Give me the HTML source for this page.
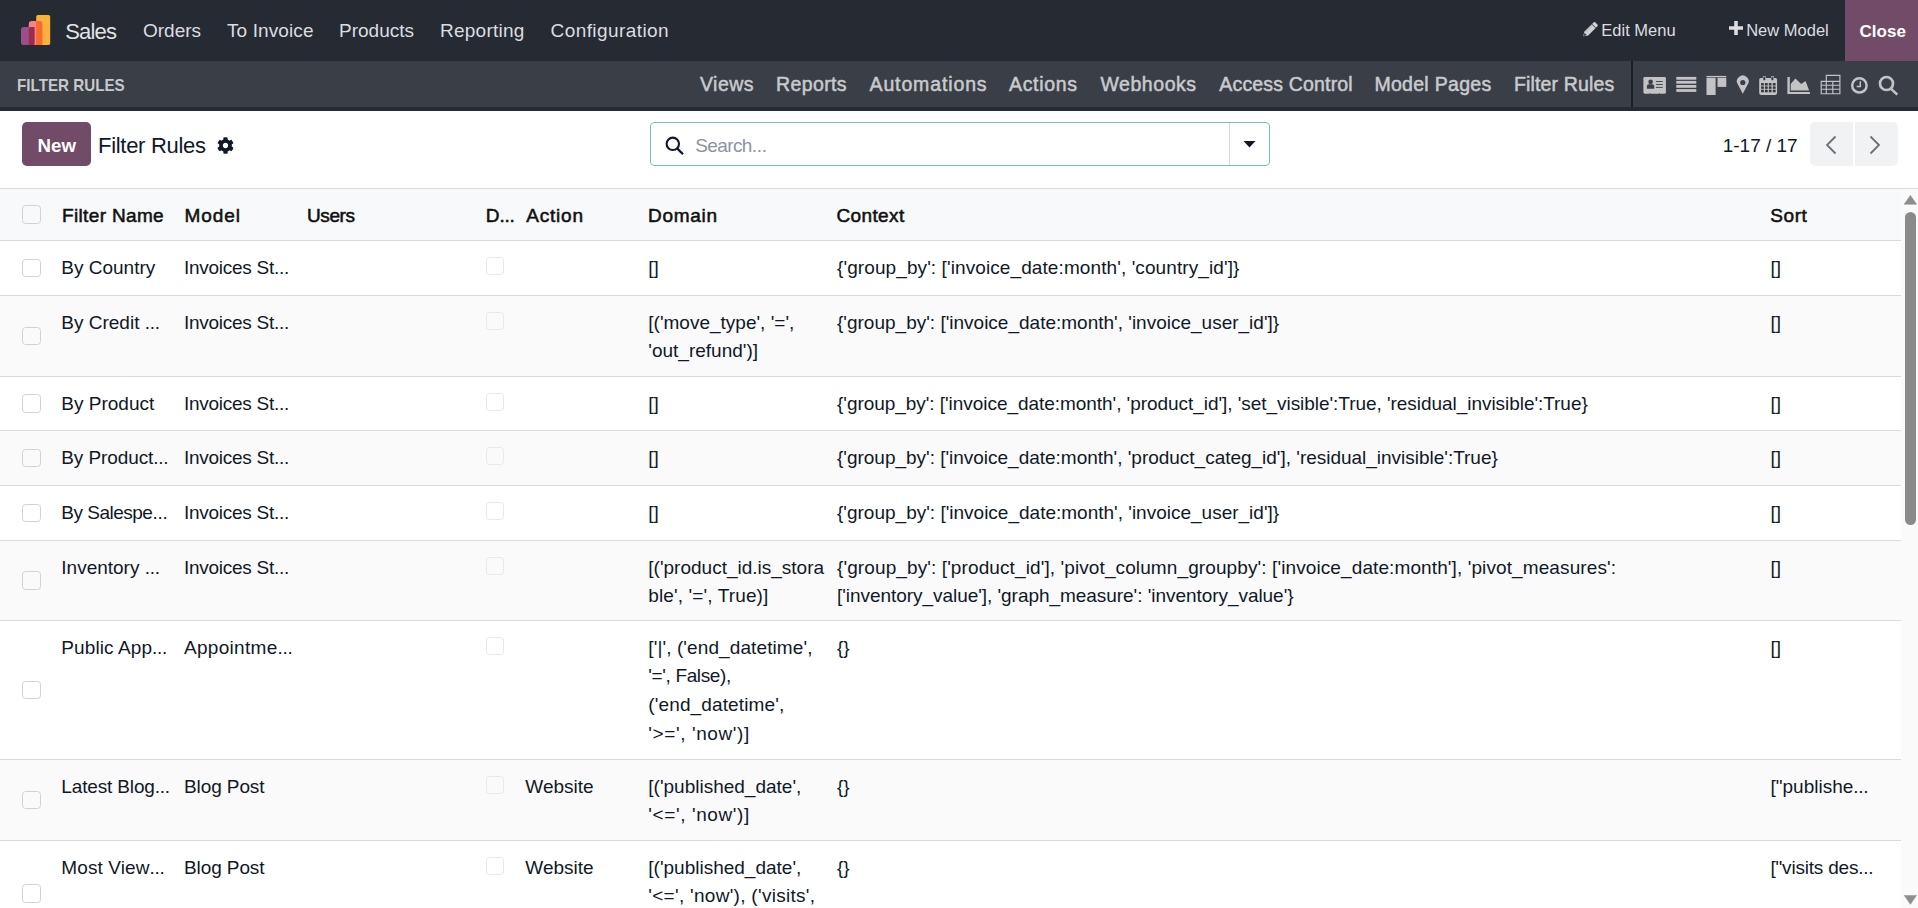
<!DOCTYPE html>
<html><head><meta charset="utf-8"><title>Filter Rules</title>
<style>
html,body{margin:0;padding:0;}
body{width:1918px;height:908px;overflow:hidden;position:relative;background:#fff;font-family:"Liberation Sans",sans-serif;}
.t{position:absolute;white-space:pre;line-height:1;}
#nav{position:absolute;left:0;top:0;width:1918px;height:60.5px;background:#262a33}
#sub{position:absolute;left:0;top:60.5px;width:1918px;height:46px;background:#3a3e47;border-bottom:4px solid #262a33}
.cb{position:absolute;width:16.5px;height:16.5px;border:1px solid #cfd2d7;border-radius:3.5px;background:transparent}
.cbd{border-color:#e6e8eb;width:16px;height:16px}
.el{letter-spacing:-0.3px}
</style></head><body>
<div id="nav"></div>
<svg id="logo" width="32" height="32" viewBox="0 0 32 32" style="position:absolute;left:20px;top:14px">
<rect x="16.2" y="0.9" width="14" height="30.1" rx="1.8" fill="#fbb13c"/>
<rect x="8.8" y="7.1" width="13.5" height="23.9" rx="2.8" fill="#f7828a"/>
<rect x="1" y="12.9" width="13.5" height="18.1" rx="2.8" fill="#9a4f8c"/>
<path d="M8.8 15.7 a2.8 2.8 0 0 1 2.8 -2.8 h2.9 v18.1 h-5.7z" fill="#9a2c4c"/>
<path d="M16.2 7.1 h3.3 a2.8 2.8 0 0 1 2.8 2.8 v21.1 h-6.1z" fill="#f86a28"/>
</svg>
<div class="t" style="left:65.3px;top:21.00px;font-size:22px;color:#e2e3e5;font-weight:400;letter-spacing:-0.85px">Sales</div>
<div class="t" style="left:143px;top:21.00px;font-size:19px;color:#dcdde0;font-weight:400;letter-spacing:0px">Orders</div>
<div class="t" style="left:227px;top:21.00px;font-size:19px;color:#dcdde0;font-weight:400;letter-spacing:0.1px">To Invoice</div>
<div class="t" style="left:339px;top:21.00px;font-size:19px;color:#dcdde0;font-weight:400;letter-spacing:0px">Products</div>
<div class="t" style="left:440px;top:21.00px;font-size:19px;color:#dcdde0;font-weight:400;letter-spacing:0.25px">Reporting</div>
<div class="t" style="left:550.5px;top:21.00px;font-size:19px;color:#dcdde0;font-weight:400;letter-spacing:0.43px">Configuration</div>
<svg width="17" height="17" viewBox="0 0 17 17" style="position:absolute;left:1582px;top:21px"><path d="M1.2 15.3 L2.4 10.6 L11.6 1.4 a1.3 1.3 0 0 1 1.8 0 l2 2 a1.3 1.3 0 0 1 0 1.8 L6.2 14.4z" fill="#d0d1d4"/><path d="M9.9 3.1 L13.7 6.9" stroke="#262a33" stroke-width="0.9"/><path d="M3.2 11.4 L10.8 3.8" stroke="#9a9ca2" stroke-width="0.6"/><path d="M1.6 14.9 L2.6 11.9 L4.6 13.9z" fill="#262a33"/></svg>
<div class="t" style="left:1601.3px;top:22.00px;font-size:16.5px;color:#dcdde0;font-weight:400;">Edit Menu</div>
<svg width="14" height="14" viewBox="0 0 14 14" style="position:absolute;left:1728.8px;top:21.3px"><path d="M5.2 0h3.6v5.2H14v3.6H8.8V14H5.2V8.8H0V5.2h5.2z" fill="#dcdde0"/></svg>
<div class="t" style="left:1746.2px;top:22.00px;font-size:16.5px;color:#dcdde0;font-weight:400;">New Model</div>
<div style="position:absolute;left:1845px;top:0;width:73px;height:60.5px;background:#714b67"></div>
<div class="t" style="left:1859.6px;top:23.00px;font-size:17px;color:#ffffff;font-weight:700;">Close</div>
<div id="sub"></div>
<div class="t" style="left:17.2px;top:77.00px;font-size:17px;color:#c8c9cc;font-weight:700;transform:scaleX(0.893);transform-origin:0 0">FILTER RULES</div>
<div class="t" style="left:700px;top:75.00px;font-size:19.5px;color:#c9cacd;font-weight:400;letter-spacing:0.47px;-webkit-text-stroke:0.5px #c9cacd">Views</div>
<div class="t" style="left:776px;top:75.00px;font-size:19.5px;color:#c9cacd;font-weight:400;letter-spacing:0.38px;-webkit-text-stroke:0.5px #c9cacd">Reports</div>
<div class="t" style="left:869.5px;top:75.00px;font-size:19.5px;color:#c9cacd;font-weight:400;letter-spacing:0.87px;-webkit-text-stroke:0.5px #c9cacd">Automations</div>
<div class="t" style="left:1009px;top:75.00px;font-size:19.5px;color:#c9cacd;font-weight:400;letter-spacing:0.67px;-webkit-text-stroke:0.5px #c9cacd">Actions</div>
<div class="t" style="left:1100.5px;top:75.00px;font-size:19.5px;color:#c9cacd;font-weight:400;letter-spacing:0.54px;-webkit-text-stroke:0.5px #c9cacd">Webhooks</div>
<div class="t" style="left:1219.3px;top:75.00px;font-size:19.5px;color:#c9cacd;font-weight:400;letter-spacing:0.17px;-webkit-text-stroke:0.5px #c9cacd">Access Control</div>
<div class="t" style="left:1374.4px;top:75.00px;font-size:19.5px;color:#c9cacd;font-weight:400;letter-spacing:0.3px;-webkit-text-stroke:0.5px #c9cacd">Model Pages</div>
<div class="t" style="left:1514px;top:75.00px;font-size:19.5px;color:#c9cacd;font-weight:400;letter-spacing:0.14px;-webkit-text-stroke:0.5px #c9cacd">Filter Rules</div>
<div style="position:absolute;left:1631px;top:61px;width:2px;height:46px;background:#1b1e27"></div>
<svg style="position:absolute;left:0;top:0" width="1918" height="110" viewBox="0 0 1918 110">
 <g fill="#c3c3c3">
  <rect x="1643.4" y="76.9" width="22.5" height="16.85" rx="1.4"/>
  <rect x="1676.3" y="76.9" width="20" height="2.8"/>
  <rect x="1676.3" y="80.9" width="20" height="2.8"/>
  <rect x="1676.3" y="85" width="20" height="2.8"/>
  <rect x="1676.3" y="89.1" width="20" height="2.8"/>
  <rect x="1706.5" y="75.9" width="19.8" height="1.3"/>
  <rect x="1706.5" y="77.8" width="9.1" height="17.2"/>
  <rect x="1717.5" y="77.8" width="8.8" height="9.1"/>
  <path d="M1742.8 93.8 L1737.9 84.6 A5.9 5.9 0 1 1 1747.7 84.6 Z"/>
  <path d="M1759.2 79.5 a1.8 1.8 0 0 1 1.8 -1.6 h1.8 v-2 h3 v2 h5.2 v-2 h3 v2 h1.3 a1.8 1.8 0 0 1 1.8 1.6 v13.6 a1.8 1.8 0 0 1 -1.8 1.8 h-14.3 a1.8 1.8 0 0 1 -1.8 -1.8 z"/>
  <path d="M1787.4 77 h2.4 v14.9 h20.1 v2.2 h-22.5z"/>
  <path d="M1790.7 90.6 V84.1 L1795.4 78.4 L1801.2 84 L1805.6 80.9 L1809.1 90.6 Z"/>
 </g>
 <g fill="#3a3e47">
  <circle cx="1650.6" cy="81.9" r="2.3"/>
  <path d="M1646.9 88.8 v-2.6 a2 2 0 0 1 2 -2 h3.3 a2 2 0 0 1 2 2 v2.6z"/>
  <rect x="1655.9" y="81.1" width="6.9" height="0.9"/>
  <rect x="1655.9" y="84" width="6.9" height="0.9"/>
  <rect x="1655.9" y="86.9" width="6.9" height="0.9"/>
  <rect x="1649.6" y="93.1" width="0.9" height="0.7"/>
  <rect x="1659" y="93.1" width="0.9" height="0.7"/>
  <rect x="1763.3" y="76.6" width="2" height="3.6"/>
  <rect x="1771.4" y="76.6" width="2" height="3.6"/>
  <circle cx="1742.8" cy="82.5" r="2.6"/>
 </g>
 <g fill="#30343c">
  <rect x="1761.1" y="83.1" width="2.7" height="2.4"/><rect x="1764.9" y="83.1" width="2.8" height="2.4"/><rect x="1768.8" y="83.1" width="2.7" height="2.4"/><rect x="1772.8" y="83.1" width="2.8" height="2.4"/>
  <rect x="1761.1" y="86.4" width="2.7" height="2.4"/><rect x="1764.9" y="86.4" width="2.8" height="2.4"/><rect x="1768.8" y="86.4" width="2.7" height="2.4"/><rect x="1772.8" y="86.4" width="2.8" height="2.4"/>
  <rect x="1761.1" y="89.7" width="2.7" height="2.6"/><rect x="1764.9" y="89.7" width="2.8" height="2.6"/><rect x="1768.8" y="89.7" width="2.7" height="2.6"/><rect x="1772.8" y="89.7" width="2.8" height="2.6"/>
 </g>
 <g fill="none" stroke="#c3c3c3">
  <path d="M1826.3 81.4 V75.4 H1839.9 V93.7 H1821.2 V81.4 H1839.9 M1821.2 85.2 H1839.9 M1821.2 89.2 H1839.9 M1826.3 81.4 V93.7 M1832.8 81.4 V93.7" stroke-width="1.15"/>
  <circle cx="1859.4" cy="85.4" r="7.2" stroke-width="2.5"/>
  <path d="M1860.3 81.2 V86.5 H1856.6" stroke-width="1.5"/>
  <circle cx="1886.5" cy="83.5" r="6.5" stroke-width="2.7"/>
  <path d="M1891.1 88.9 L1897.3 94.6" stroke-width="2.6"/>
 </g>
</svg>
<div style="position:absolute;left:22px;top:122px;width:69px;height:44px;border-radius:5px;background:#714b67"></div>
<div class="t" style="left:37.5px;top:137.00px;font-size:18.7px;color:#ffffff;font-weight:700;">New</div>
<div class="t" style="left:98px;top:135.00px;font-size:22px;color:#111827;font-weight:400;letter-spacing:-0.3px">Filter Rules</div>
<svg style="position:absolute;left:217px;top:137px" width="17" height="17" viewBox="0 0 512 512"><path fill="#111827" d="M487.4 315.7l-42.6-24.6c4.3-23.2 4.3-47 0-70.2l42.6-24.6c4.9-2.8 7.1-8.6 5.5-14-11.1-35.6-30-67.8-54.7-94.6-3.8-4.1-10-5.1-14.8-2.3L380.8 110c-17.9-15.4-38.5-27.3-60.8-35.1V25.8c0-5.6-3.9-10.5-9.4-11.7-36.7-8.2-74.3-7.8-109.2 0-5.5 1.2-9.4 6.1-9.4 11.7V75c-22.2 7.9-42.8 19.8-60.8 35.1L88.7 85.5c-4.9-2.8-11-1.9-14.8 2.3-24.7 26.7-43.6 58.9-54.7 94.6-1.7 5.4.6 11.2 5.5 14L67.3 221c-4.3 23.2-4.3 47 0 70.2l-42.6 24.6c-4.9 2.8-7.1 8.6-5.5 14 11.1 35.6 30 67.8 54.7 94.6 3.8 4.1 10 5.1 14.8 2.3l42.6-24.6c17.9 15.4 38.5 27.3 60.8 35.1v49.2c0 5.6 3.9 10.5 9.4 11.7 36.7 8.2 74.3 7.8 109.2 0 5.5-1.2 9.4-6.1 9.4-11.7v-49.2c22.2-7.9 42.8-19.8 60.8-35.1l42.6 24.6c4.9 2.8 11 1.9 14.8-2.3 24.7-26.7 43.6-58.9 54.7-94.6 1.5-5.5-.7-11.3-5.6-14.1zM256 336c-44.1 0-80-35.9-80-80s35.9-80 80-80 80 35.9 80 80-35.9 80-80 80z"/></svg>
<div style="position:absolute;left:650px;top:122px;width:618px;height:41.5px;border:1px solid #7fb9c2;border-radius:4px;background:#fff"></div>
<div style="position:absolute;left:1229px;top:123px;width:1px;height:41.5px;background:#d8dadd"></div>
<svg style="position:absolute;left:665px;top:136px" width="20" height="19" viewBox="0 0 20 19"><circle cx="7.8" cy="7.8" r="6.2" fill="none" stroke="#111827" stroke-width="2.1"/><path d="M12.2 12.4 L18 18.2" stroke="#111827" stroke-width="2.3"/></svg>
<div class="t" style="left:695.2px;top:136.00px;font-size:19px;color:#8b93a1;font-weight:400;letter-spacing:-0.6px">Search<span class="el">...</span></div>
<svg style="position:absolute;left:1243px;top:140px" width="13" height="8" viewBox="0 0 13 8"><path d="M0.5 1h12L6.5 7.5z" fill="#111827"/></svg>
<div class="t" style="left:1722.7px;top:136.00px;font-size:19px;color:#111827;font-weight:400;">1-17 / 17</div>
<div style="position:absolute;left:1810px;top:122px;width:43px;height:43.6px;background:#f1f2f4;border-radius:5px 0 0 5px"></div>
<div style="position:absolute;left:1855px;top:122px;width:43px;height:43.6px;background:#f1f2f4;border-radius:0 5px 5px 0"></div>
<svg style="position:absolute;left:1824px;top:135px" width="14" height="20" viewBox="0 0 14 20"><path d="M11.5 1.5 L3 10 L11.5 18.5" fill="none" stroke="#6b7079" stroke-width="1.8"/></svg>
<svg style="position:absolute;left:1868px;top:135px" width="14" height="20" viewBox="0 0 14 20"><path d="M2.5 1.5 L11 10 L2.5 18.5" fill="none" stroke="#6b7079" stroke-width="1.8"/></svg>
<div style="position:absolute;left:0;top:188px;width:1918px;height:1px;background:#d8dade"></div>
<div style="position:absolute;left:0;top:189px;width:1901px;height:51px;background:#f8f9fa"></div>
<div style="position:absolute;left:0;top:240px;width:1901px;height:1px;background:#d8dade"></div>
<div class="cb" style="left:22.2px;top:205.1px"></div>
<div class="t" style="left:62px;top:206.00px;font-size:19px;color:#111111;font-weight:400;-webkit-text-stroke:0.55px #111111;letter-spacing:0.35px">Filter Name</div>
<div class="t" style="left:184.5px;top:206.00px;font-size:19px;color:#111111;font-weight:400;-webkit-text-stroke:0.55px #111111;letter-spacing:0.9px">Model</div>
<div class="t" style="left:307px;top:206.00px;font-size:19px;color:#111111;font-weight:400;-webkit-text-stroke:0.55px #111111;letter-spacing:-0.4px">Users</div>
<div class="t" style="left:485.8px;top:206.00px;font-size:19px;color:#111111;font-weight:400;-webkit-text-stroke:0.55px #111111;letter-spacing:0px">D<span class="el">...</span></div>
<div class="t" style="left:526.3px;top:206.00px;font-size:19px;color:#111111;font-weight:400;-webkit-text-stroke:0.55px #111111;letter-spacing:0.78px">Action</div>
<div class="t" style="left:648px;top:206.00px;font-size:19px;color:#111111;font-weight:400;-webkit-text-stroke:0.55px #111111;letter-spacing:0.7px">Domain</div>
<div class="t" style="left:836.4px;top:206.00px;font-size:19px;color:#111111;font-weight:400;-webkit-text-stroke:0.55px #111111;letter-spacing:0.4px">Context</div>
<div class="t" style="left:1770.2px;top:206.00px;font-size:19px;color:#111111;font-weight:400;-webkit-text-stroke:0.55px #111111;letter-spacing:0.6px">Sort</div>
<div style="position:absolute;left:0;top:241px;width:1901px;height:54px;background:#ffffff"></div>
<div style="position:absolute;left:0;top:295px;width:1901px;height:1px;background:#d8dade"></div>
<div class="cb" style="left:22.2px;top:258.75px"></div>
<div class="cb cbd" style="left:485.6px;top:257.10px"></div>
<div class="t" style="left:61.3px;top:258.00px;font-size:19px;color:#111827;font-weight:400;letter-spacing:0px">By Country</div>
<div class="t" style="left:184px;top:258.00px;font-size:19px;color:#111827;font-weight:400;letter-spacing:-0.27px">Invoices St<span class="el">...</span></div>
<div class="t" style="left:648.3px;top:258.00px;font-size:19px;color:#111827;font-weight:400;letter-spacing:0px">[]</div>
<div class="t" style="left:837px;top:258.00px;font-size:19px;color:#111827;font-weight:400;letter-spacing:0.094px">{&#x27;group_by&#x27;: [&#x27;invoice_date:month&#x27;, &#x27;country_id&#x27;]}</div>
<div class="t" style="left:1770.5px;top:258.00px;font-size:19px;color:#111827;font-weight:400;letter-spacing:0px">[]</div>
<div style="position:absolute;left:0;top:296px;width:1901px;height:80px;background:#fafafa"></div>
<div style="position:absolute;left:0;top:376px;width:1901px;height:1px;background:#d8dade"></div>
<div class="cb" style="left:22.2px;top:326.75px"></div>
<div class="cb cbd" style="left:485.6px;top:312.10px"></div>
<div class="t" style="left:61.3px;top:313.00px;font-size:19px;color:#111827;font-weight:400;letter-spacing:0px">By Credit <span class="el">...</span></div>
<div class="t" style="left:184px;top:313.00px;font-size:19px;color:#111827;font-weight:400;letter-spacing:-0.27px">Invoices St<span class="el">...</span></div>
<div class="t" style="left:648.3px;top:313.00px;font-size:19px;color:#111827;font-weight:400;letter-spacing:0px">[(&#x27;move_type&#x27;, &#x27;=&#x27;,</div>
<div class="t" style="left:648.3px;top:341.00px;font-size:19px;color:#111827;font-weight:400;letter-spacing:0px">&#x27;out_refund&#x27;)]</div>
<div class="t" style="left:837px;top:313.00px;font-size:19px;color:#111827;font-weight:400;letter-spacing:0px">{&#x27;group_by&#x27;: [&#x27;invoice_date:month&#x27;, &#x27;invoice_user_id&#x27;]}</div>
<div class="t" style="left:1770.5px;top:313.00px;font-size:19px;color:#111827;font-weight:400;letter-spacing:0px">[]</div>
<div style="position:absolute;left:0;top:377px;width:1901px;height:53px;background:#ffffff"></div>
<div style="position:absolute;left:0;top:430px;width:1901px;height:1px;background:#d8dade"></div>
<div class="cb" style="left:22.2px;top:394.25px"></div>
<div class="cb cbd" style="left:485.6px;top:393.10px"></div>
<div class="t" style="left:61.3px;top:394.00px;font-size:19px;color:#111827;font-weight:400;letter-spacing:0px">By Product</div>
<div class="t" style="left:184px;top:394.00px;font-size:19px;color:#111827;font-weight:400;letter-spacing:-0.27px">Invoices St<span class="el">...</span></div>
<div class="t" style="left:648.3px;top:394.00px;font-size:19px;color:#111827;font-weight:400;letter-spacing:0px">[]</div>
<div class="t" style="left:837px;top:394.00px;font-size:19px;color:#111827;font-weight:400;letter-spacing:-0.046px">{&#x27;group_by&#x27;: [&#x27;invoice_date:month&#x27;, &#x27;product_id&#x27;], &#x27;set_visible&#x27;:True, &#x27;residual_invisible&#x27;:True}</div>
<div class="t" style="left:1770.5px;top:394.00px;font-size:19px;color:#111827;font-weight:400;letter-spacing:0px">[]</div>
<div style="position:absolute;left:0;top:431px;width:1901px;height:54px;background:#fafafa"></div>
<div style="position:absolute;left:0;top:485px;width:1901px;height:1px;background:#d8dade"></div>
<div class="cb" style="left:22.2px;top:448.75px"></div>
<div class="cb cbd" style="left:485.6px;top:447.10px"></div>
<div class="t" style="left:61.3px;top:448.00px;font-size:19px;color:#111827;font-weight:400;letter-spacing:-0.1px">By Product<span class="el">...</span></div>
<div class="t" style="left:184px;top:448.00px;font-size:19px;color:#111827;font-weight:400;letter-spacing:-0.27px">Invoices St<span class="el">...</span></div>
<div class="t" style="left:648.3px;top:448.00px;font-size:19px;color:#111827;font-weight:400;letter-spacing:0px">[]</div>
<div class="t" style="left:837px;top:448.00px;font-size:19px;color:#111827;font-weight:400;letter-spacing:-0.015px">{&#x27;group_by&#x27;: [&#x27;invoice_date:month&#x27;, &#x27;product_categ_id&#x27;], &#x27;residual_invisible&#x27;:True}</div>
<div class="t" style="left:1770.5px;top:448.00px;font-size:19px;color:#111827;font-weight:400;letter-spacing:0px">[]</div>
<div style="position:absolute;left:0;top:486px;width:1901px;height:54px;background:#ffffff"></div>
<div style="position:absolute;left:0;top:540px;width:1901px;height:1px;background:#d8dade"></div>
<div class="cb" style="left:22.2px;top:503.75px"></div>
<div class="cb cbd" style="left:485.6px;top:502.10px"></div>
<div class="t" style="left:61.3px;top:503.00px;font-size:19px;color:#111827;font-weight:400;letter-spacing:-0.5px">By Salespe<span class="el">...</span></div>
<div class="t" style="left:184px;top:503.00px;font-size:19px;color:#111827;font-weight:400;letter-spacing:-0.27px">Invoices St<span class="el">...</span></div>
<div class="t" style="left:648.3px;top:503.00px;font-size:19px;color:#111827;font-weight:400;letter-spacing:0px">[]</div>
<div class="t" style="left:837px;top:503.00px;font-size:19px;color:#111827;font-weight:400;letter-spacing:0px">{&#x27;group_by&#x27;: [&#x27;invoice_date:month&#x27;, &#x27;invoice_user_id&#x27;]}</div>
<div class="t" style="left:1770.5px;top:503.00px;font-size:19px;color:#111827;font-weight:400;letter-spacing:0px">[]</div>
<div style="position:absolute;left:0;top:541px;width:1901px;height:79px;background:#fafafa"></div>
<div style="position:absolute;left:0;top:620px;width:1901px;height:1px;background:#d8dade"></div>
<div class="cb" style="left:22.2px;top:571.25px"></div>
<div class="cb cbd" style="left:485.6px;top:557.10px"></div>
<div class="t" style="left:61.3px;top:558.00px;font-size:19px;color:#111827;font-weight:400;letter-spacing:0px">Inventory <span class="el">...</span></div>
<div class="t" style="left:184px;top:558.00px;font-size:19px;color:#111827;font-weight:400;letter-spacing:-0.27px">Invoices St<span class="el">...</span></div>
<div class="t" style="left:648.3px;top:558.00px;font-size:19px;color:#111827;font-weight:400;letter-spacing:0px">[(&#x27;product_id.is_stora</div>
<div class="t" style="left:648.3px;top:586.00px;font-size:19px;color:#111827;font-weight:400;letter-spacing:0.12px">ble&#x27;, &#x27;=&#x27;, True)]</div>
<div class="t" style="left:837px;top:558.00px;font-size:19px;color:#111827;font-weight:400;letter-spacing:0.105px">{&#x27;group_by&#x27;: [&#x27;product_id&#x27;], &#x27;pivot_column_groupby&#x27;: [&#x27;invoice_date:month&#x27;], &#x27;pivot_measures&#x27;:</div>
<div class="t" style="left:837px;top:586.00px;font-size:19px;color:#111827;font-weight:400;letter-spacing:-0.045px">[&#x27;inventory_value&#x27;], &#x27;graph_measure&#x27;: &#x27;inventory_value&#x27;}</div>
<div class="t" style="left:1770.5px;top:558.00px;font-size:19px;color:#111827;font-weight:400;letter-spacing:0px">[]</div>
<div style="position:absolute;left:0;top:621px;width:1901px;height:138px;background:#ffffff"></div>
<div style="position:absolute;left:0;top:759px;width:1901px;height:1px;background:#d8dade"></div>
<div class="cb" style="left:22.2px;top:680.75px"></div>
<div class="cb cbd" style="left:485.6px;top:637.10px"></div>
<div class="t" style="left:61.3px;top:638.00px;font-size:19px;color:#111827;font-weight:400;letter-spacing:0.1px">Public App<span class="el">...</span></div>
<div class="t" style="left:184px;top:638.00px;font-size:19px;color:#111827;font-weight:400;letter-spacing:0.3px">Appointme<span class="el">...</span></div>
<div class="t" style="left:648.3px;top:638.00px;font-size:19px;color:#111827;font-weight:400;letter-spacing:0.1px">[&#x27;|&#x27;, (&#x27;end_datetime&#x27;,</div>
<div class="t" style="left:648.3px;top:666.00px;font-size:19px;color:#111827;font-weight:400;letter-spacing:-0.36px">&#x27;=&#x27;, False),</div>
<div class="t" style="left:648.3px;top:695.00px;font-size:19px;color:#111827;font-weight:400;letter-spacing:0.13px">(&#x27;end_datetime&#x27;,</div>
<div class="t" style="left:648.3px;top:724.00px;font-size:19px;color:#111827;font-weight:400;letter-spacing:0.6px">&#x27;&gt;=&#x27;, &#x27;now&#x27;)]</div>
<div class="t" style="left:837px;top:638.00px;font-size:19px;color:#111827;font-weight:400;letter-spacing:0px">{}</div>
<div class="t" style="left:1770.5px;top:638.00px;font-size:19px;color:#111827;font-weight:400;letter-spacing:0px">[]</div>
<div style="position:absolute;left:0;top:760px;width:1901px;height:80px;background:#fafafa"></div>
<div style="position:absolute;left:0;top:840px;width:1901px;height:1px;background:#d8dade"></div>
<div class="cb" style="left:22.2px;top:790.75px"></div>
<div class="cb cbd" style="left:485.6px;top:776.10px"></div>
<div class="t" style="left:61.3px;top:777.00px;font-size:19px;color:#111827;font-weight:400;letter-spacing:-0.15px">Latest Blog<span class="el">...</span></div>
<div class="t" style="left:184px;top:777.00px;font-size:19px;color:#111827;font-weight:400;letter-spacing:-0.1px">Blog Post</div>
<div class="t" style="left:525.3px;top:777.00px;font-size:19px;color:#111827;font-weight:400;">Website</div>
<div class="t" style="left:648.3px;top:777.00px;font-size:19px;color:#111827;font-weight:400;letter-spacing:0px">[(&#x27;published_date&#x27;,</div>
<div class="t" style="left:648.3px;top:805.00px;font-size:19px;color:#111827;font-weight:400;letter-spacing:0.6px">&#x27;&lt;=&#x27;, &#x27;now&#x27;)]</div>
<div class="t" style="left:837px;top:777.00px;font-size:19px;color:#111827;font-weight:400;letter-spacing:0px">{}</div>
<div class="t" style="left:1770.5px;top:777.00px;font-size:19px;color:#111827;font-weight:400;letter-spacing:0px">[&quot;publishe<span class="el">...</span></div>
<div style="position:absolute;left:0;top:841px;width:1901px;height:105px;background:#ffffff"></div>
<div style="position:absolute;left:0;top:946px;width:1901px;height:1px;background:#d8dade"></div>
<div class="cb" style="left:22.2px;top:884.25px"></div>
<div class="cb cbd" style="left:485.6px;top:857.10px"></div>
<div class="t" style="left:61.3px;top:858.00px;font-size:19px;color:#111827;font-weight:400;letter-spacing:0.1px">Most View<span class="el">...</span></div>
<div class="t" style="left:184px;top:858.00px;font-size:19px;color:#111827;font-weight:400;letter-spacing:-0.1px">Blog Post</div>
<div class="t" style="left:525.3px;top:858.00px;font-size:19px;color:#111827;font-weight:400;">Website</div>
<div class="t" style="left:648.3px;top:858.00px;font-size:19px;color:#111827;font-weight:400;letter-spacing:0px">[(&#x27;published_date&#x27;,</div>
<div class="t" style="left:648.3px;top:886.00px;font-size:19px;color:#111827;font-weight:400;letter-spacing:0.29px">&#x27;&lt;=&#x27;, &#x27;now&#x27;), (&#x27;visits&#x27;,</div>
<div class="t" style="left:648.3px;top:915.00px;font-size:19px;color:#111827;font-weight:400;letter-spacing:0px">&#x27;&gt;&#x27;, 0)]</div>
<div class="t" style="left:837px;top:858.00px;font-size:19px;color:#111827;font-weight:400;letter-spacing:0px">{}</div>
<div class="t" style="left:1770.5px;top:858.00px;font-size:19px;color:#111827;font-weight:400;letter-spacing:-0.2px">[&quot;visits des<span class="el">...</span></div>
<div style="position:absolute;left:1901px;top:189px;width:17px;height:719px;background:#fafafa"></div>
<svg style="position:absolute;left:1904px;top:195px" width="13" height="10" viewBox="0 0 13 10"><path d="M6.4 0.4 L12.6 9.2 H0.2z" fill="#8e8e8e" stroke="#8e8e8e" stroke-width="0.6" stroke-linejoin="round"/></svg>
<div style="position:absolute;left:1905px;top:212px;width:11px;height:313px;background:#8a8a8a;border-radius:5.5px"></div>
<svg style="position:absolute;left:1904px;top:895px" width="13" height="10" viewBox="0 0 13 10"><path d="M0.3 0.4 H12.5 L6.4 9.3z" fill="#8e8e8e" stroke="#8e8e8e" stroke-width="0.6" stroke-linejoin="round"/></svg>
</body></html>
